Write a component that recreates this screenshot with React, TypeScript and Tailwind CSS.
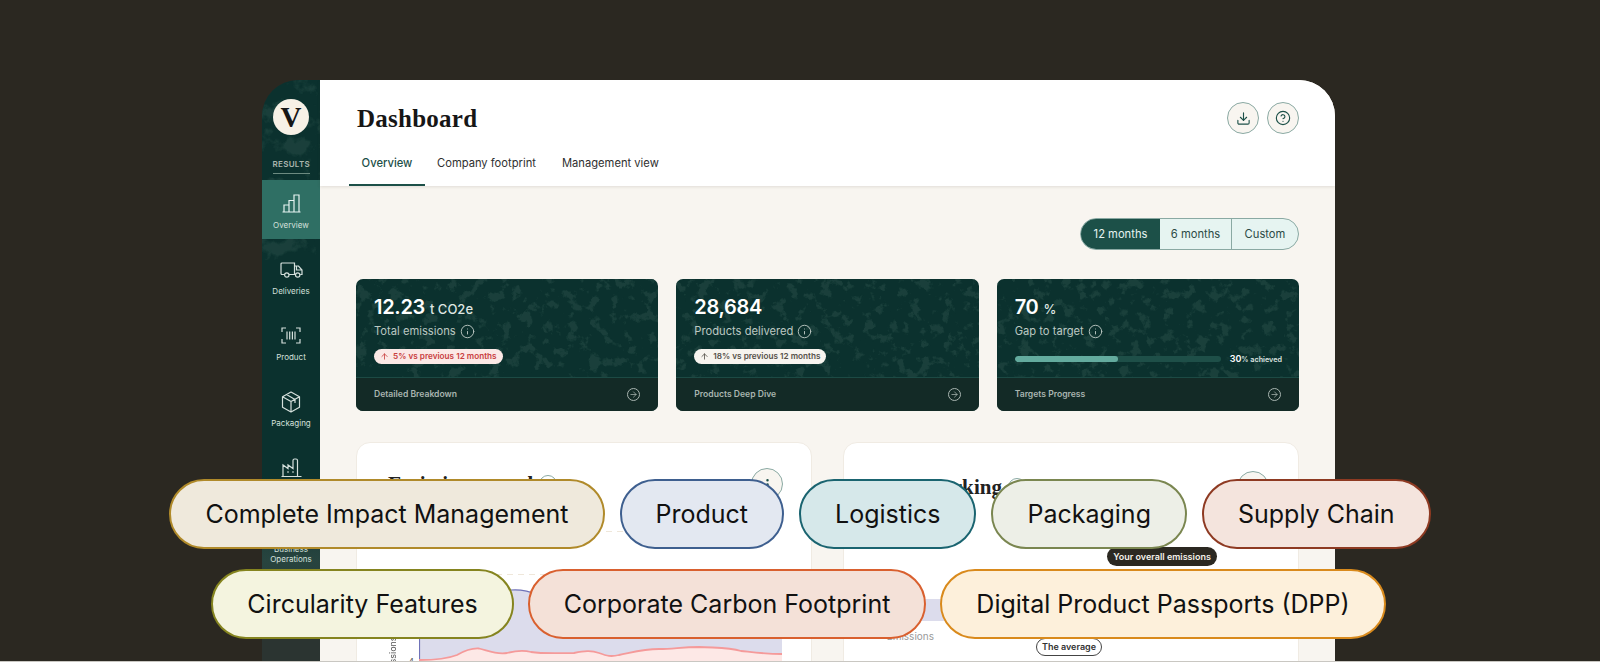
import { ArrowRight, ArrowUp, Building2, CircleHelp, Download, EllipsisVertical, Info } from "lucide-react";

// mottled texture used on the sidebar and the stat cards
const Mottle = ({ id, seed, opacity, frequency }: { id: string; seed: number; opacity: string; frequency: string }) => (
  <svg className={`absolute inset-0 h-full w-full ${opacity}`} aria-hidden="true">
    <filter id={id} x="0" y="0" width="100%" height="100%" colorInterpolationFilters="sRGB">
      <feTurbulence type="fractalNoise" baseFrequency={frequency} numOctaves="5" seed={seed} />
      <feColorMatrix values="0 0 0 0 0.11  0 0 0 0 0.26  0 0 0 0 0.24  8 0 0 0 -4.4" />
    </filter>
    <rect width="100%" height="100%" filter={`url(#${id})`} />
  </svg>
);

const BarsIcon = () => (
  <svg width="19" height="19" viewBox="0 0 19 19" fill="none" stroke="#e6f4f1" strokeWidth="1.2">
    <path d="M0.5 18h18M2 18v-7h5v7M7 18V6.5h5V18M12 18V1h5v17" />
  </svg>
);

const TruckIcon = () => (
  <svg width="23" height="16" viewBox="0 0 23 16" fill="none" stroke="#d5e0dc" strokeWidth="1.2">
    <path d="M4.5 12.5H2a1 1 0 0 1-1-1V2a1 1 0 0 1 1-1h12.5v11.5H9" />
    <path d="M14.5 4h4l3.5 4v4.5h-1.8M14.5 12.5h.8M16.5 4v4H22" />
    <circle cx="6.8" cy="13" r="2.2" />
    <circle cx="17.7" cy="13" r="2.2" />
  </svg>
);

const BarcodeIcon = () => (
  <svg width="20" height="17" viewBox="0 0 20 17" fill="none" stroke="#d5e0dc" strokeWidth="1.2">
    <path d="M1 5V1h4M15 1h4v4M1 12v4h4M15 16h4v-4M6 4.5v8M8.7 4.5v8M11.4 4.5v8M14 4.5v8" />
  </svg>
);

const BoxIcon = () => (
  <svg width="20" height="22" viewBox="0 0 20 22" fill="none" stroke="#d5e0dc" strokeWidth="1.2" strokeLinejoin="round">
    <path d="M10 1l8.5 4.8v10.4L10 21l-8.5-4.8V5.8zM1.5 5.8l8.5 4.8 8.5-4.8M10 10.6V21M5.5 3.4l8.5 5v3.6" />
  </svg>
);

const FactoryIcon = () => (
  <svg width="21" height="19" viewBox="0 0 21 19" fill="none" stroke="#d5e0dc" strokeWidth="1.2">
    <path d="M0.5 18.5h20M2 18.5V7l5 3.5V7l5 3.5V2.5A1.5 1.5 0 0 1 13.5 1H15a1.5 1.5 0 0 1 1.5 1.5v16M6 14h2M11 14h2" />
  </svg>
);

const navItems = [
  { label: "Overview", icon: <BarsIcon />, active: true },
  { label: "Deliveries", icon: <TruckIcon /> },
  { label: "Product", icon: <BarcodeIcon /> },
  { label: "Packaging", icon: <BoxIcon /> },
  { label: "Factories", icon: <FactoryIcon /> },
];

const Sidebar = () => (
  <aside className="relative flex w-[58px] shrink-0 flex-col items-center overflow-hidden bg-[linear-gradient(180deg,#0b312e_0%,#0b312e_66%,#27443f_80%,#2b3431_92%)] pt-[19px]">
    <div className="absolute inset-x-0 top-0 h-[180px]">
      <Mottle id="side-top" seed={9} opacity="opacity-90" frequency="0.04" />
    </div>
    <div className="relative flex h-[36px] w-[36px] items-center justify-center rounded-full bg-[#f7f1e6] font-['Liberation_Serif',serif] text-[29px] leading-none font-bold text-[#161616]">
      V
    </div>
    <div className="relative mt-[24px] h-[15px] w-[37px] border-b border-[#6c8a80] text-center text-[8px] leading-[10px] font-semibold tracking-[0.3px] text-[#a9b5ad]">
      RESULTS
    </div>
    <nav className="relative mt-[6px] flex w-full flex-col gap-[7px]">
      {navItems.map((item) => (
        <div
          key={item.label}
          className={`flex h-[59px] flex-col items-center pt-[13px] ${item.active ? "bg-[#2f6f64]" : ""}`}
        >
          <div className="flex h-[21px] items-center justify-center">{item.icon}</div>
          <span className="mt-[6px] text-[8px] leading-[10px] text-[#d5e0dc]">{item.label}</span>
        </div>
      ))}
      <div className="flex h-[59px] flex-col items-center pt-[12px]">
        <Building2 size={20} strokeWidth={1.2} color="#d5e0dc" />
        <span className="mt-[2px] text-center text-[8px] leading-[10px] text-[#d5e0dc]">
          Business Operations
        </span>
      </div>
    </nav>
  </aside>
);

const Tabs = () => (
  <div className="mt-[8px] flex h-[44px] px-[29px] text-[11.2px]">
    <div className="flex w-[76px] items-start justify-center border-b-2 border-[#1c5048] pt-[13px] font-medium text-[#1c5048]">
      Overview
    </div>
    <div className="ml-[12px] px-0 pt-[13px] text-[#2f2f2f]">Company footprint</div>
    <div className="ml-[26px] pt-[13px] text-[#2f2f2f]">Management view</div>
  </div>
);

const Header = () => (
  <header className="relative h-[106px] shrink-0 bg-white pt-[22px] shadow-[0_1px_3px_rgba(60,50,30,0.12)]">
    <div className="flex h-[32px] items-center justify-between pr-[36px] pl-[37px]">
      <h1 className="font-['Liberation_Serif',serif] text-[25px] leading-none font-bold tracking-[0.25px] text-[#161616]">
        Dashboard
      </h1>
      <div className="flex gap-[8px]">
        <div className="flex h-[32px] w-[32px] items-center justify-center rounded-full border border-[#8aa9a3] bg-[#f8f5f0] text-[#1c5048]">
          <Download size={15} strokeWidth={1.8} />
        </div>
        <div className="flex h-[32px] w-[32px] items-center justify-center rounded-full border border-[#8aa9a3] bg-[#f8f5f0] text-[#1c5048]">
          <CircleHelp size={16} strokeWidth={1.7} />
        </div>
      </div>
    </div>
    <Tabs />
  </header>
);

const RangeToggle = () => (
  <div className="flex justify-end">
    <div className="flex h-[32px] w-[219px] overflow-hidden rounded-full border border-[#8aa9a3] bg-[#e6f4f1] text-[11.2px] text-[#2c4a45]">
      <div className="flex w-[79px] items-center justify-center bg-[#1c5048] text-[#e6f4f1]">12 months</div>
      <div className="flex w-[72px] items-center justify-center border-r border-[#8aa9a3]">6 months</div>
      <div className="flex flex-1 items-center justify-center">Custom</div>
    </div>
  </div>
);

const StatCard = ({
  id,
  seed,
  footer,
  children,
}: {
  id: string;
  seed: number;
  footer: string;
  children: React.ReactNode;
}) => (
  <article className="flex h-[132px] flex-col overflow-hidden rounded-[7px] bg-[#0b312e]">
    <div className="relative h-[99px] border-b border-[#1c4a44] px-[18px] pt-[15px]">
      <Mottle id={id} seed={seed} opacity="opacity-90" frequency="0.09" />
      <div className="relative">{children}</div>
    </div>
    <div className="flex flex-1 items-center justify-between bg-[#132a26] px-[18px] text-[8.6px] font-semibold text-[#a9b5b0]">
      <span>{footer}</span>
      <span className="flex h-[13px] w-[13px] items-center justify-center rounded-full border border-[#a9b5b0]">
        <ArrowRight size={9} strokeWidth={2} />
      </span>
    </div>
  </article>
);

const StatValue = ({ value, unit }: { value: string; unit?: string }) => (
  <div className="flex h-[26px] items-baseline gap-[5px] text-white">
    <span className="text-[20px] leading-[26px] font-semibold tracking-[-0.3px]">{value}</span>
    {unit && <span className="text-[13px] font-medium text-[#dfe6e2]">{unit}</span>}
  </div>
);

const StatLabel = ({ text }: { text: string }) => (
  <div className="mt-[3px] flex h-[16px] items-center gap-[4px] text-[11.2px] text-[#bcc8c2]">
    {text}
    <Info size={15} strokeWidth={1.5} />
  </div>
);

const Pill = ({ text, tone }: { text: string; tone: "red" | "neutral" }) => (
  <div
    className={`mt-[10px] flex h-[15px] w-fit items-center gap-[4px] rounded-full pr-[6px] pl-[6px] text-[8.2px] font-semibold ${
      tone === "red" ? "bg-[#fbe9e6] text-[#c9403f]" : "bg-[#f7f4ef] text-[#55514a]"
    }`}
  >
    <ArrowUp size={9} strokeWidth={2.2} />
    {text}
  </div>
);

const StatCards = () => (
  <div className="mt-[29px] grid grid-cols-3 gap-[18px]">
    <StatCard id="card-a" seed={3} footer="Detailed Breakdown">
      <StatValue value="12.23" unit="t CO2e" />
      <StatLabel text="Total emissions" />
      <Pill text="5% vs previous 12 months" tone="red" />
    </StatCard>
    <StatCard id="card-b" seed={12} footer="Products Deep Dive">
      <StatValue value="28,684" />
      <StatLabel text="Products delivered" />
      <Pill text="18% vs previous 12 months" tone="neutral" />
    </StatCard>
    <StatCard id="card-c" seed={21} footer="Targets Progress">
      <StatValue value="70" unit="%" />
      <StatLabel text="Gap to target" />
      <div className="mt-[13px] flex items-center gap-[9px]">
        <div className="h-[6px] w-[206px] shrink-0 overflow-hidden rounded-full bg-[#1e4f48]">
          <div className="h-full w-1/2 rounded-full bg-[#63ab9e]" />
        </div>
        <span className="text-[7.2px] font-semibold whitespace-nowrap text-[#dfe6e2]">
          <span className="text-[9px] text-white">30</span>% achieved
        </span>
      </div>
    </StatCard>
  </div>
);

const CardHeader = ({ title }: { title: string }) => (
  <div className="flex h-[32px] items-center justify-between">
    <div className="flex items-center gap-[6px]">
      <h2 className="font-['Liberation_Serif',serif] text-[21px] leading-none font-bold tracking-[0.1px] text-[#222]">
        {title}
      </h2>
      <span className="flex h-[18px] w-[18px] items-center justify-center rounded-full border border-[#8aa9a3] text-[#1c5048]">
        <Info size={11} strokeWidth={1.6} />
      </span>
    </div>
    <span className="flex h-[32px] w-[32px] items-center justify-center rounded-full border border-[#8aa9a3] bg-[#f8f5f0] text-[#1c5048]">
      <EllipsisVertical size={15} />
    </span>
  </div>
);

const TrendChart = () => (
  <div className="relative mt-[31px] flex h-[140px]">
    <div className="flex w-[31px] shrink-0 justify-between">
      <span className="mt-[98px] h-[50px] rotate-180 text-[9px] leading-[10px] text-[#555] [writing-mode:vertical-rl]">
        Emissions
      </span>
      <span className="mt-[125px] mr-[5px] text-[8px] leading-[10px] text-[#555]">4</span>
    </div>
    <svg width="363" height="140" viewBox="0 0 363 140" fill="none">
      <path d="M0 0.5h363M0 43.5h363" stroke="#efe7da" strokeDasharray="6 5" />
      <path d="M0 130V68C40 66 70 60 92 59C102 58 110 60 120 64C170 72 300 70 363 73V140H0Z" fill="#dcdcec" />
      <path d="M0.5 140V68C40 66 70 60 92 59C102 58 110 60 120 64" stroke="#6f72b8" strokeWidth="1.2" />
      <path
        d="M0 129C15 129 28 128 38 124C45 120 52 117 60 117.5C70 120 78 124 88 122C96 120 104 119 112 121C125 123 140 122 155 122C165 120 172 119 180 122C188 125 192 126 200 124C215 121 225 118 240 118C255 118 262 116 280 116C300 117 310 116 322 120C332 121 345 123 363 123V140H0Z"
        fill="#fde8e6"
      />
      <path
        d="M0 129C15 129 28 128 38 124C45 120 52 117 60 117.5C70 120 78 124 88 122C96 120 104 119 112 121C125 123 140 122 155 122C165 120 172 119 180 122C188 125 192 126 200 124C215 121 225 118 240 118C255 118 262 116 280 116C300 117 310 116 322 120C332 121 345 123 363 123"
        stroke="#f59a9a"
        strokeWidth="1.8"
      />
    </svg>
  </div>
);

const BenchmarkChart = () => (
  <>
    <div className="absolute top-[156px] left-[37px] h-[22px] w-[330px] bg-[#dcdcec]" />
    <div className="absolute top-[187px] right-[364px] text-[10px] leading-[12px] text-[#9a9a9a]">Emissions</div>
    <div className="absolute top-[104px] left-[263px] flex h-[19px] w-[110px] items-center justify-center rounded-full bg-[#2b2821] text-[9px] font-semibold text-[#f4f1ea]">
      Your overall emissions
    </div>
    <div className="absolute top-[195px] left-[192px] flex h-[18px] w-[66px] items-center justify-center rounded-full border border-[#444] bg-white text-[9px] font-semibold text-[#333]">
      The average
    </div>
  </>
);

const ChartCards = () => (
  <div className="mt-[31px] grid grid-cols-2 gap-[31px]">
    <section className="h-[260px] rounded-[14px] border border-[#f0ebe3] bg-white pt-[25px] pr-[28px] pl-[31px]">
      <CardHeader title="Emissions trend" />
      <TrendChart />
    </section>
    <section className="relative h-[260px] rounded-[14px] border border-[#f0ebe3] bg-white pt-[28px] pr-[29px] pl-[24px]">
      <CardHeader title="Benchmarking" />
      <BenchmarkChart />
    </section>
  </div>
);

const tagRows = [
  [
    { label: "Complete Impact Management", tone: "border-[#b08a2a] bg-[#efe9dc]" },
    { label: "Product", tone: "border-[#3e5f8f] bg-[#e3e8f1]" },
    { label: "Logistics", tone: "border-[#1a6470] bg-[#d6e8ea]" },
    { label: "Packaging", tone: "border-[#7a8650] bg-[#edefe7]" },
    { label: "Supply Chain", tone: "border-[#8e3a22] bg-[#f4e4dd]" },
  ],
  [
    { label: "Circularity Features", tone: "border-[#85841f] bg-[#f4f4df]" },
    { label: "Corporate Carbon Footprint", tone: "border-[#d9602f] bg-[#f4e1d8]" },
    { label: "Digital Product Passports (DPP)", tone: "border-[#d98a1c] bg-[#fdf0db]" },
  ],
];

const TagCloud = () => (
  <div className="absolute inset-x-0 top-[479px] flex flex-col gap-[20px]">
    {tagRows.map((row, i) => (
      <div key={row[0].label} className={`flex justify-center ${i === 1 ? "gap-[14px] pr-[3px]" : "gap-[15px]"}`}>
        {row.map((tag) => (
          <div
            key={tag.label}
            className={`flex h-[70px] items-center rounded-full border-2 px-[34px] text-[25px] leading-none text-[#111] ${tag.tone}`}
          >
            {tag.label}
          </div>
        ))}
      </div>
    ))}
  </div>
);

export default function App() {
  return (
    <div className="relative h-[662px] overflow-hidden bg-[#2b2821] pt-[80px] pl-[262px] font-['Inter',sans-serif]">
      <div className="flex h-[600px] w-[1073px] overflow-hidden rounded-t-[36px]">
        <Sidebar />
        <main className="flex flex-1 flex-col bg-[#f8f5f0]">
          <Header />
          <div className="pt-[32px] pr-[36px] pl-[36px]">
            <RangeToggle />
            <StatCards />
            <ChartCards />
          </div>
        </main>
      </div>
      <TagCloud />
      <div className="absolute inset-x-0 bottom-0 h-px bg-[#c9c7c2]" />
    </div>
  );
}
